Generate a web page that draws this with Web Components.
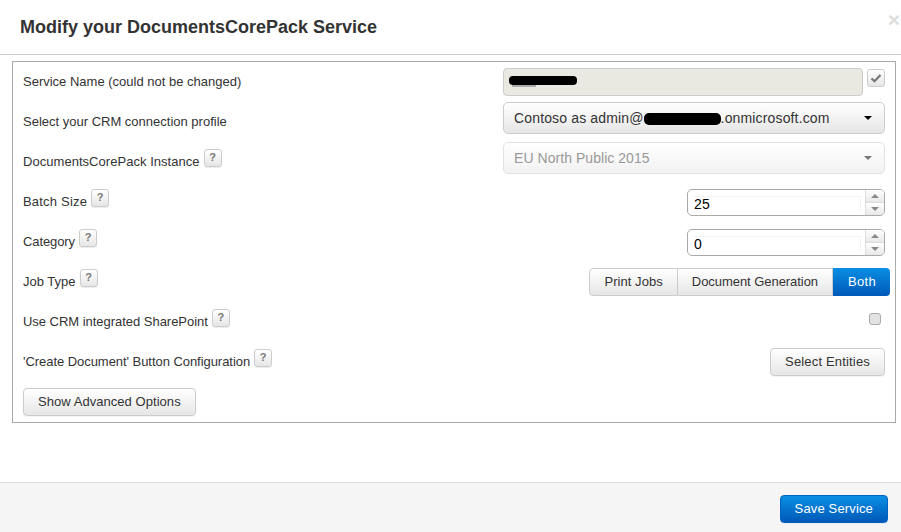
<!DOCTYPE html>
<html>
<head>
<meta charset="utf-8">
<title>Modify your DocumentsCorePack Service</title>
<style>
  html, body { margin: 0; height: 100%; }
  body { font: 13px/20px "Liberation Sans", Arial, sans-serif; color: #333; background: #fff; }
</style>
</head>
<body>
<service-dialog heading="Modify your DocumentsCorePack Service">
  <form-row label="Service Name (could not be changed)">
    <name-field></name-field>
  </form-row>
  <form-row label="Select your CRM connection profile">
    <select-box>Contoso as admin@<black-out></black-out>.onmicrosoft.com</select-box>
  </form-row>
  <form-row label="DocumentsCorePack Instance" help style="letter-spacing: .04px">
    <select-box disabled>EU North Public 2015</select-box>
  </form-row>
  <form-row label="Batch Size" help style="letter-spacing: .2px">
    <spin-box value="25"></spin-box>
  </form-row>
  <form-row label="Category" help style="letter-spacing: -.1px">
    <spin-box value="0"></spin-box>
  </form-row>
  <form-row label="Job Type" help>
    <toggle-group options="Print Jobs|Document Generation|Both" selected="2"></toggle-group>
  </form-row>
  <form-row label="Use CRM integrated SharePoint" help style="letter-spacing: -.03px">
    <check-box></check-box>
  </form-row>
  <form-row label="'Create Document' Button Configuration" help style="letter-spacing: -.05px">
    <ui-button style="letter-spacing: .17px">Select Entities</ui-button>
  </form-row>
  <form-row>
    <ui-button slot="label" style="letter-spacing: .05px">Show Advanced Options</ui-button>
  </form-row>
  <ui-button slot="footer" primary>Save Service</ui-button>
</service-dialog>

<script>
customElements.define(
  'service-dialog',
  class ServiceDialog extends HTMLElement {
    constructor() {
      super()
      this.attachShadow({ mode: 'open' })
      this.shadowRoot.innerHTML = `
      <style>
        :host {
          display: flex;
          flex-direction: column;
          height: 532px;
          overflow: hidden;
        }
        .header {
          flex: none;
          height: 54px;
          border-bottom: 1px solid #ccc;
          display: flex;
          align-items: center;
          justify-content: space-between;
          padding: 0 1px 0 20px;
        }
        h1 {
          margin: 0;
          font-size: 18px;
          font-weight: bold;
          line-height: 20px;
          color: #333;
        }
        .close {
          align-self: flex-start;
          margin-top: 10px;
          font-size: 21px;
          line-height: 20px;
          font-weight: bold;
          color: #ddd;
        }
        .body {
          flex: 1;
          padding: 6px 5px 0 12px;
        }
        .panel {
          border: 1px solid #aaa;
          padding: 0 10px;
          height: 360px;
          display: flex;
          flex-direction: column;
        }
        .footer {
          flex: none;
          height: 50px;
          background: #f5f5f5;
          border-top: 1px solid #ddd;
          display: flex;
          align-items: center;
          justify-content: flex-end;
          padding: 3px 13px 0 0;
          box-sizing: border-box;
        }
      </style>
      <div class="header">
        <h1></h1>
        <span class="close">×</span>
      </div>
      <div class="body">
        <div class="panel"><slot></slot></div>
      </div>
      <div class="footer"><slot name="footer"></slot></div>
`
      this.shadowRoot.querySelector('h1').textContent = this.getAttribute('heading')
    }
  }
)

customElements.define(
  'form-row',
  class FormRow extends HTMLElement {
    constructor() {
      super()
      this.attachShadow({ mode: 'open' })
      this.shadowRoot.innerHTML = `
      <style>
        :host {
          display: flex;
          flex: none;
          height: 40px;
          align-items: center;
          justify-content: space-between;
        }
        .label {
          display: flex;
          align-items: center;
          gap: 4px;
          white-space: nowrap;
        }
        .help {
          box-sizing: border-box;
          width: 18px;
          height: 18px;
          margin-bottom: 8px;
          border: 1px solid #ccc;
          border-radius: 3px;
          background: linear-gradient(#fff, #e6e6e6);
          box-shadow: 0 1px 1px rgba(0,0,0,.08);
          font-size: 11px;
          font-weight: bold;
          line-height: 15px;
          text-align: center;
          color: #777;
        }
      </style>
      <div class="label"><slot name="label"></slot></div>
      <slot></slot>
`
      const label = this.shadowRoot.querySelector('.label')
      if (this.hasAttribute('label')) {
        label.append(this.getAttribute('label'))
      }
      if (this.hasAttribute('help')) {
        const help = document.createElement('span')
        help.className = 'help'
        help.textContent = '?'
        label.append(help)
      }
    }
  }
)

customElements.define(
  'black-out',
  class BlackOut extends HTMLElement {
    constructor() {
      super()
      this.attachShadow({ mode: 'open' })
      this.shadowRoot.innerHTML = `
      <style>
        :host {
          display: inline-block;
          width: 77px;
          height: 12px;
          background: #000;
          border-radius: 5px;
          vertical-align: -2px;
        }
      </style>
`
    }
  }
)

customElements.define(
  'name-field',
  class NameField extends HTMLElement {
    constructor() {
      super()
      this.attachShadow({ mode: 'open' })
      this.shadowRoot.innerHTML = `
      <style>
        :host {
          display: flex;
          width: 382px;
          justify-content: space-between;
          align-items: flex-start;
        }
        .input {
          box-sizing: border-box;
          width: 360px;
          height: 28px;
          background: #e9e8e1;
          border: 1px solid #ccc;
          border-radius: 4px;
          padding: 7px 0 0 5px;
        }
        .blot {
          width: 68px;
          height: 9px;
          background: #000;
          border-radius: 4px;
        }
        .trace {
          width: 24px;
          height: 2px;
          margin-left: 3px;
          background: #aaa;
        }
        .check {
          box-sizing: border-box;
          width: 18px;
          height: 18px;
          margin-top: 1px;
          border: 1px solid #ccc;
          border-radius: 3px;
          background: linear-gradient(#fff, #e6e6e6);
          display: flex;
          align-items: center;
          justify-content: center;
        }
      </style>
      <div class="input"><div class="blot"></div><div class="trace"></div></div>
      <div class="check">
        <svg width="12" height="10" viewBox="0 0 12 10"><path d="M1.5 5.5 4.5 8.2 10.5 2" fill="none" stroke="#777" stroke-width="2.2"/></svg>
      </div>
`
    }
  }
)

customElements.define(
  'select-box',
  class SelectBox extends HTMLElement {
    constructor() {
      super()
      this.attachShadow({ mode: 'open' })
      this.shadowRoot.innerHTML = `
      <style>
        :host {
          box-sizing: border-box;
          display: flex;
          align-items: center;
          justify-content: space-between;
          align-self: flex-start;
          width: 382px;
          height: 32px;
          padding: 0 12px 0 10px;
          border: 1px solid #ccc;
          border-radius: 5px;
          background: linear-gradient(#fff, #e6e6e6);
          font-size: 14px;
          letter-spacing: .15px;
          white-space: nowrap;
        }
        :host([disabled]) {
          border-color: #e2e2e2;
          background: linear-gradient(#fff, #f2f2f2);
          color: #999;
          letter-spacing: .05px;
        }
        .caret {
          width: 0;
          height: 0;
          border: 4px solid transparent;
          border-top-color: #000;
          border-bottom: 0;
        }
        :host([disabled]) .caret { border-top-color: #777; }
      </style>
      <span><slot></slot></span>
      <span class="caret"></span>
`
    }
  }
)

customElements.define(
  'spin-box',
  class SpinBox extends HTMLElement {
    constructor() {
      super()
      this.attachShadow({ mode: 'open' })
      this.shadowRoot.innerHTML = `
      <style>
        :host {
          box-sizing: border-box;
          display: flex;
          width: 198px;
          height: 27px;
          border: 1px solid #aaa;
          border-radius: 5px;
          background: #fff;
          color: #000;
          font-size: 14px;
        }
        .value {
          flex: 1;
          margin: 6px 4px 4px 6px;
          border-top: 1px solid #f3f3f3;
          border-right: 1px solid #f3f3f3;
          line-height: 15px;
        }
        .arrows {
          width: 18px;
          display: flex;
          flex-direction: column;
          border-left: 1px solid #ddd;
          border-radius: 0 4px 4px 0;
          overflow: hidden;
        }
        .arrows span {
          flex: 1;
          display: flex;
          align-items: center;
          justify-content: center;
          background: linear-gradient(#fff, #e8e8e8);
        }
        .arrows span + span { border-top: 1px solid #ddd; }
        .arrows i {
          width: 0;
          height: 0;
          border: 4px solid transparent;
        }
        .up { border-bottom-color: #888 !important; border-top: 0 !important; }
        .down { border-top-color: #888 !important; border-bottom: 0 !important; }
      </style>
      <div class="value"></div>
      <div class="arrows">
        <span><i class="up"></i></span>
        <span><i class="down"></i></span>
      </div>
`
      this.shadowRoot.querySelector('.value').textContent = this.getAttribute('value')
    }
  }
)

customElements.define(
  'toggle-group',
  class ToggleGroup extends HTMLElement {
    constructor() {
      super()
      this.attachShadow({ mode: 'open' })
      this.shadowRoot.innerHTML = `
      <style>
        :host {
          display: flex;
          height: 28px;
          margin-right: -5px;
        }
        button {
          font: inherit;
          letter-spacing: -.05px;
          color: #333;
          height: 28px;
          padding: 0 14px;
          border: 1px solid #ccc;
          border-left: 0;
          background: linear-gradient(#fff, #e6e6e6);
        }
        button:first-of-type {
          border-left: 1px solid #ccc;
          border-radius: 4px 0 0 4px;
          letter-spacing: .06px;
        }
        button:last-of-type { border-radius: 0 4px 4px 0; }
        button.on {
          color: #fff;
          border: 0;
          padding: 0 14px 0 15px;
          letter-spacing: .3px;
          background: linear-gradient(#0a8ee4, #0059b8);
        }
      </style>
`
      const selected = +this.getAttribute('selected')
      this.getAttribute('options').split('|').forEach((text, i) => {
        const button = document.createElement('button')
        button.textContent = text
        if (i === selected) button.className = 'on'
        this.shadowRoot.append(button)
      })
    }
  }
)

customElements.define(
  'check-box',
  class CheckBox extends HTMLElement {
    constructor() {
      super()
      this.attachShadow({ mode: 'open' })
      this.shadowRoot.innerHTML = `
      <style>
        :host {
          box-sizing: border-box;
          display: block;
          width: 12px;
          height: 12px;
          margin: 0 4px 6px 0;
          border: 1px solid #aaa;
          border-radius: 3px;
          background: #e2e2e2;
        }
      </style>
`
    }
  }
)

customElements.define(
  'ui-button',
  class UiButton extends HTMLElement {
    constructor() {
      super()
      this.attachShadow({ mode: 'open' })
      this.shadowRoot.innerHTML = `
      <style>
        :host {
          box-sizing: border-box;
          display: inline-flex;
          align-items: center;
          height: 28px;
          padding: 0 14px;
          border: 1px solid #ccc;
          border-radius: 4px;
          background: linear-gradient(#fff, #e6e6e6);
          box-shadow: 0 1px 1px rgba(0,0,0,.05);
          white-space: nowrap;
        }
        :host([primary]) {
          border-color: #0062c0;
          background: linear-gradient(#0a8ee4, #0059b8);
          color: #fff;
          letter-spacing: .15px;
        }
      </style>
      <slot></slot>
`
    }
  }
)
</script>
</body>
</html>
